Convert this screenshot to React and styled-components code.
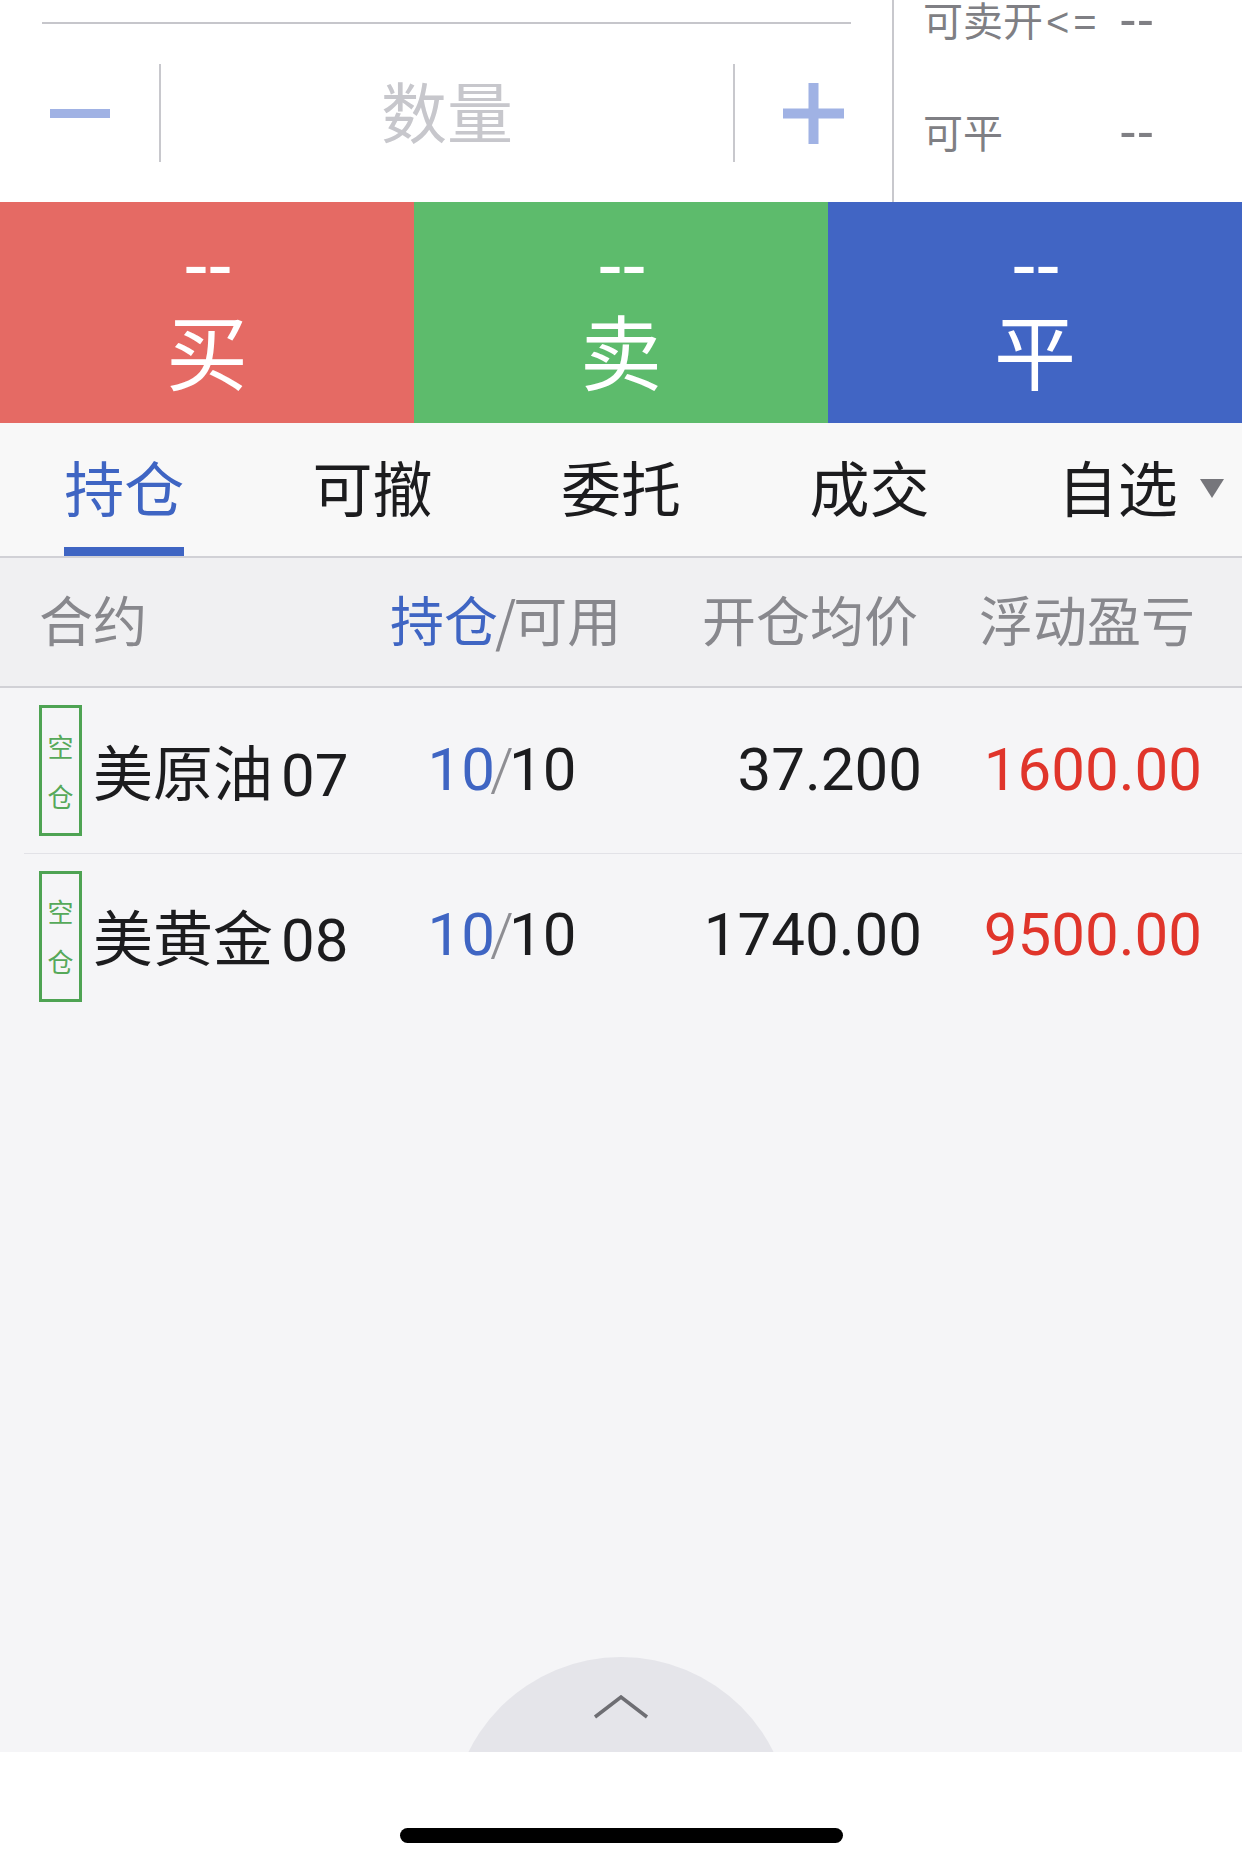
import React from "react";
import styled, { createGlobalStyle } from "styled-components";

const CJK = `"Noto Sans CJK SC", sans-serif`;
const MIX = `Roboto, "Noto Sans CJK SC", sans-serif`;
const BLUE = "#3f65c3";

const Global = createGlobalStyle`
  html, body { margin: 0; padding: 0; background: #ffffff; }
  body { font-family: ${MIX}; -webkit-font-smoothing: antialiased; }
  * { box-sizing: border-box; }
`;

const Page = styled.div`
  width: 1242px;
  height: 1866px;
  display: flex;
  flex-direction: column;
  overflow: hidden;
  background: #f5f5f7;
`;

/* ---------- top order panel ---------- */
const TopSection = styled.section`
  height: 202px;
  flex: none;
  display: flex;
  background: #ffffff;
`;

const QtyPanel = styled.div`
  width: 892px;
  display: flex;
  flex-direction: column;
  padding: 22px 41px 0 42px;
`;

const TopRule = styled.div`
  height: 2px;
  background: #c6c6cb;
`;

const QtyRow = styled.div`
  margin-top: 40px;
  height: 98px;
  display: flex;
  align-items: stretch;
`;

const StepButton = styled.button`
  width: 75px;
  border: 0;
  padding: 0;
  background: transparent;
  display: flex;
  align-items: center;
  justify-content: center;
  margin: ${(p) => (p.$side === "left" ? "0 42px 0 0" : "0 0 0 41px")};
`;

const VDivider = styled.div`
  width: 2px;
  background: #c8c8cd;
`;

const QtyInput = styled.div`
  flex: 1;
  display: flex;
  align-items: center;
  justify-content: center;
  padding-bottom: 8px;
  font-family: ${CJK};
  font-size: 66px;
  line-height: 1;
  color: #c7c7cc;
`;

const AvailPanel = styled.div`
  flex: 1;
  border-left: 2px solid #c8c8cd;
  padding: 0 0 0 29px;
  display: flex;
  flex-direction: column;
  gap: 74px;
`;

const AvailRow = styled.div`
  width: 231px;
  height: 38px;
  display: flex;
  align-items: center;
  justify-content: space-between;
  font-family: ${CJK};
  font-size: 40px;
  color: #7f7f84;
  white-space: nowrap;
`;

const Cmp = styled.span`
  font-family: "Liberation Sans", sans-serif;
  letter-spacing: 4px;
  margin-left: 3px;
`;

const AvailDash = styled.span`
  font-family: "Liberation Sans", sans-serif;
  font-size: 52px;
  line-height: 38px;
  color: #7f7f84;
`;

/* ---------- action buttons ---------- */
const ActionBar = styled.div`
  height: 221px;
  flex: none;
  display: flex;
`;

const ActionButton = styled.button`
  flex: 1;
  border: 0;
  padding: 47px 0 0;
  margin: 0;
  background: ${(p) => p.$bg};
  color: #ffffff;
  display: flex;
  flex-direction: column;
  align-items: center;
`;

const ActionDash = styled.div`
  height: 30px;
  font-family: "Liberation Sans", sans-serif;
  font-size: 78px;
  line-height: 30px;
  letter-spacing: -2px;
`;

const ActionLabel = styled.div`
  margin-top: 25px;
  height: 90px;
  font-family: ${CJK};
  font-size: 82px;
  line-height: 90px;
`;

/* ---------- tabs ---------- */
const TabBar = styled.nav`
  height: 135px;
  flex: none;
  display: flex;
  background: #f8f8f8;
  border-bottom: 2px solid #d1d1d6;
`;

const Tab = styled.div`
  flex: 1;
  position: relative;
  display: flex;
  align-items: center;
  justify-content: center;
  padding-bottom: 7px;
  font-family: ${CJK};
  font-size: 60px;
  line-height: 1;
  color: ${(p) => (p.$active ? BLUE : "#1c1c1e")};

  &::after {
    content: "";
    display: ${(p) => (p.$active ? "block" : "none")};
    position: absolute;
    left: 50%;
    bottom: 0;
    width: 120px;
    height: 9px;
    margin-left: -60px;
    background: ${BLUE};
  }
`;

const TabLabel = styled.span`
  position: relative;
`;

const Caret = styled.svg`
  position: absolute;
  left: calc(100% + 22px);
  top: 50%;
  margin-top: -7px;
`;

/* ---------- table ---------- */
const Grid = `
  display: grid;
  grid-template-columns: 351px 224px 308px 280px 1fr;
  align-items: center;
`;

const HeaderRow = styled.div`
  ${Grid}
  height: 130px;
  flex: none;
  padding-left: 39px;
  padding-bottom: 7px;
  background: #f0f0f2;
  border-bottom: 2px solid #d1d1d6;
  font-family: ${CJK};
  font-size: 54px;
  color: #88888d;
`;

const HeadCell = styled.div`
  text-align: ${(p) => p.$align || "left"};
  padding-right: ${(p) => p.$pad || 0}px;
  white-space: nowrap;
`;

const Accent = styled.span`
  color: ${BLUE};
`;

const HeadSlash = styled.span`
  margin: 0 -3px;
`;

const PositionRow = styled.div`
  ${Grid}
  height: 165px;
  flex: none;
  margin-left: 24px;
  padding-left: 15px;
  padding-bottom: 3px;
  font-family: ${MIX};
  font-size: 60px;
  color: #1c1c1e;

  & + & {
    border-top: 1px solid #e2e2e7;
  }
`;

const NameCell = styled.div`
  display: flex;
  align-items: center;
  gap: 11px;
  white-space: nowrap;
`;

const SideBadge = styled.div`
  width: 43px;
  height: 131px;
  margin-top: 3px;
  border: 3px solid #4ea353;
  display: flex;
  flex-direction: column;
  align-items: center;
  justify-content: center;
  gap: 22px;
  font-family: ${CJK};
  font-size: 26px;
  line-height: 28px;
  color: #56a95a;
`;

const Digits = styled.span`
  margin-left: 8px;
`;

const ValueCell = styled.div`
  text-align: ${(p) => p.$align || "right"};
  color: ${(p) => p.$color || "#1c1c1e"};
  white-space: nowrap;
`;

const Held = styled.span`
  color: ${BLUE};
`;

const Slash = styled.span`
  color: #8e8e93;
  font-weight: 300;
  margin: 0 -5px;
`;

/* ---------- bottom ---------- */
const Filler = styled.div`
  flex: 1;
  display: flex;
  flex-direction: column;
  justify-content: flex-end;
  align-items: center;
`;

const PullHandle = styled.div`
  width: 340px;
  height: 95px;
  overflow: hidden;
`;

const HandleDisc = styled.div`
  width: 340px;
  height: 340px;
  border-radius: 50%;
  background: #e5e5ea;
  display: flex;
  justify-content: center;
  padding-top: 38px;
`;

const HomeArea = styled.div`
  height: 114px;
  flex: none;
  background: #ffffff;
  display: flex;
  justify-content: center;
  padding-top: 76px;
`;

const HomeIndicator = styled.div`
  width: 443px;
  height: 15px;
  border-radius: 8px;
  background: #000000;
`;

const positions = [
  { name: "美原油", code: "07", held: "10", avail: "10", price: "37.200", pnl: "1600.00" },
  { name: "美黄金", code: "08", held: "10", avail: "10", price: "1740.00", pnl: "9500.00" },
];

const actions = [
  { label: "买", bg: "#e56a64" },
  { label: "卖", bg: "#5dbb6c" },
  { label: "平", bg: "#4165c4" },
];

const tabs = ["持仓", "可撤", "委托", "成交", "自选"];

export default function App() {
  return (
    <Page>
      <Global />
      <TopSection>
        <QtyPanel>
          <TopRule />
          <QtyRow>
            <StepButton $side="left" aria-label="减少">
              <svg width="60" height="9" viewBox="0 0 60 9">
                <rect x="0" y="0" width="60" height="9" fill="#a0b2e4" />
              </svg>
            </StepButton>
            <VDivider />
            <QtyInput>数量</QtyInput>
            <VDivider />
            <StepButton $side="right" aria-label="增加">
              <svg width="61" height="61" viewBox="0 0 61 61">
                <rect x="0" y="25.5" width="61" height="10" fill="#a0b2e4" />
                <rect x="25.5" y="0" width="10" height="61" fill="#a0b2e4" />
              </svg>
            </StepButton>
          </QtyRow>
        </QtyPanel>
        <AvailPanel>
          <AvailRow>
            <span>
              可卖开<Cmp>&lt;=</Cmp>
            </span>
            <AvailDash>--</AvailDash>
          </AvailRow>
          <AvailRow>
            <span>可平</span>
            <AvailDash>--</AvailDash>
          </AvailRow>
        </AvailPanel>
      </TopSection>

      <ActionBar>
        {actions.map((a) => (
          <ActionButton key={a.label} $bg={a.bg}>
            <ActionDash>--</ActionDash>
            <ActionLabel>{a.label}</ActionLabel>
          </ActionButton>
        ))}
      </ActionBar>

      <TabBar>
        {tabs.map((t, i) => (
          <Tab key={t} $active={i === 0}>
            <TabLabel>
              {t}
              {t === "自选" && (
                <Caret width="24" height="19" viewBox="0 0 24 19">
                  <polygon points="0,0 24,0 12,19" fill="#76767b" />
                </Caret>
              )}
            </TabLabel>
          </Tab>
        ))}
      </TabBar>

      <HeaderRow>
        <HeadCell>合约</HeadCell>
        <HeadCell $align="center" $pad={10}>
          <Accent>持仓</Accent>
          <HeadSlash>/</HeadSlash>可用
        </HeadCell>
        <HeadCell $align="right" $pad={4}>开仓均价</HeadCell>
        <HeadCell $align="right" $pad={7}>浮动盈亏</HeadCell>
        <div />
      </HeaderRow>

      {positions.map((p) => (
        <PositionRow key={p.name}>
          <NameCell>
            <SideBadge>
              <span>空</span>
              <span>仓</span>
            </SideBadge>
            <span>
              {p.name}
              <Digits>{p.code}</Digits>
            </span>
          </NameCell>
          <ValueCell $align="center">
            <Held>{p.held}</Held>
            <Slash>/</Slash>
            {p.avail}
          </ValueCell>
          <ValueCell>{p.price}</ValueCell>
          <ValueCell $color="#e0352b">{p.pnl}</ValueCell>
          <div />
        </PositionRow>
      ))}

      <Filler>
        <PullHandle>
          <HandleDisc>
            <svg width="56" height="24" viewBox="0 0 56 24">
              <polyline
                points="2,22 28,2 54,22"
                fill="none"
                stroke="#6e6e73"
                strokeWidth="3.5"
              />
            </svg>
          </HandleDisc>
        </PullHandle>
      </Filler>

      <HomeArea>
        <HomeIndicator />
      </HomeArea>
    </Page>
  );
}
